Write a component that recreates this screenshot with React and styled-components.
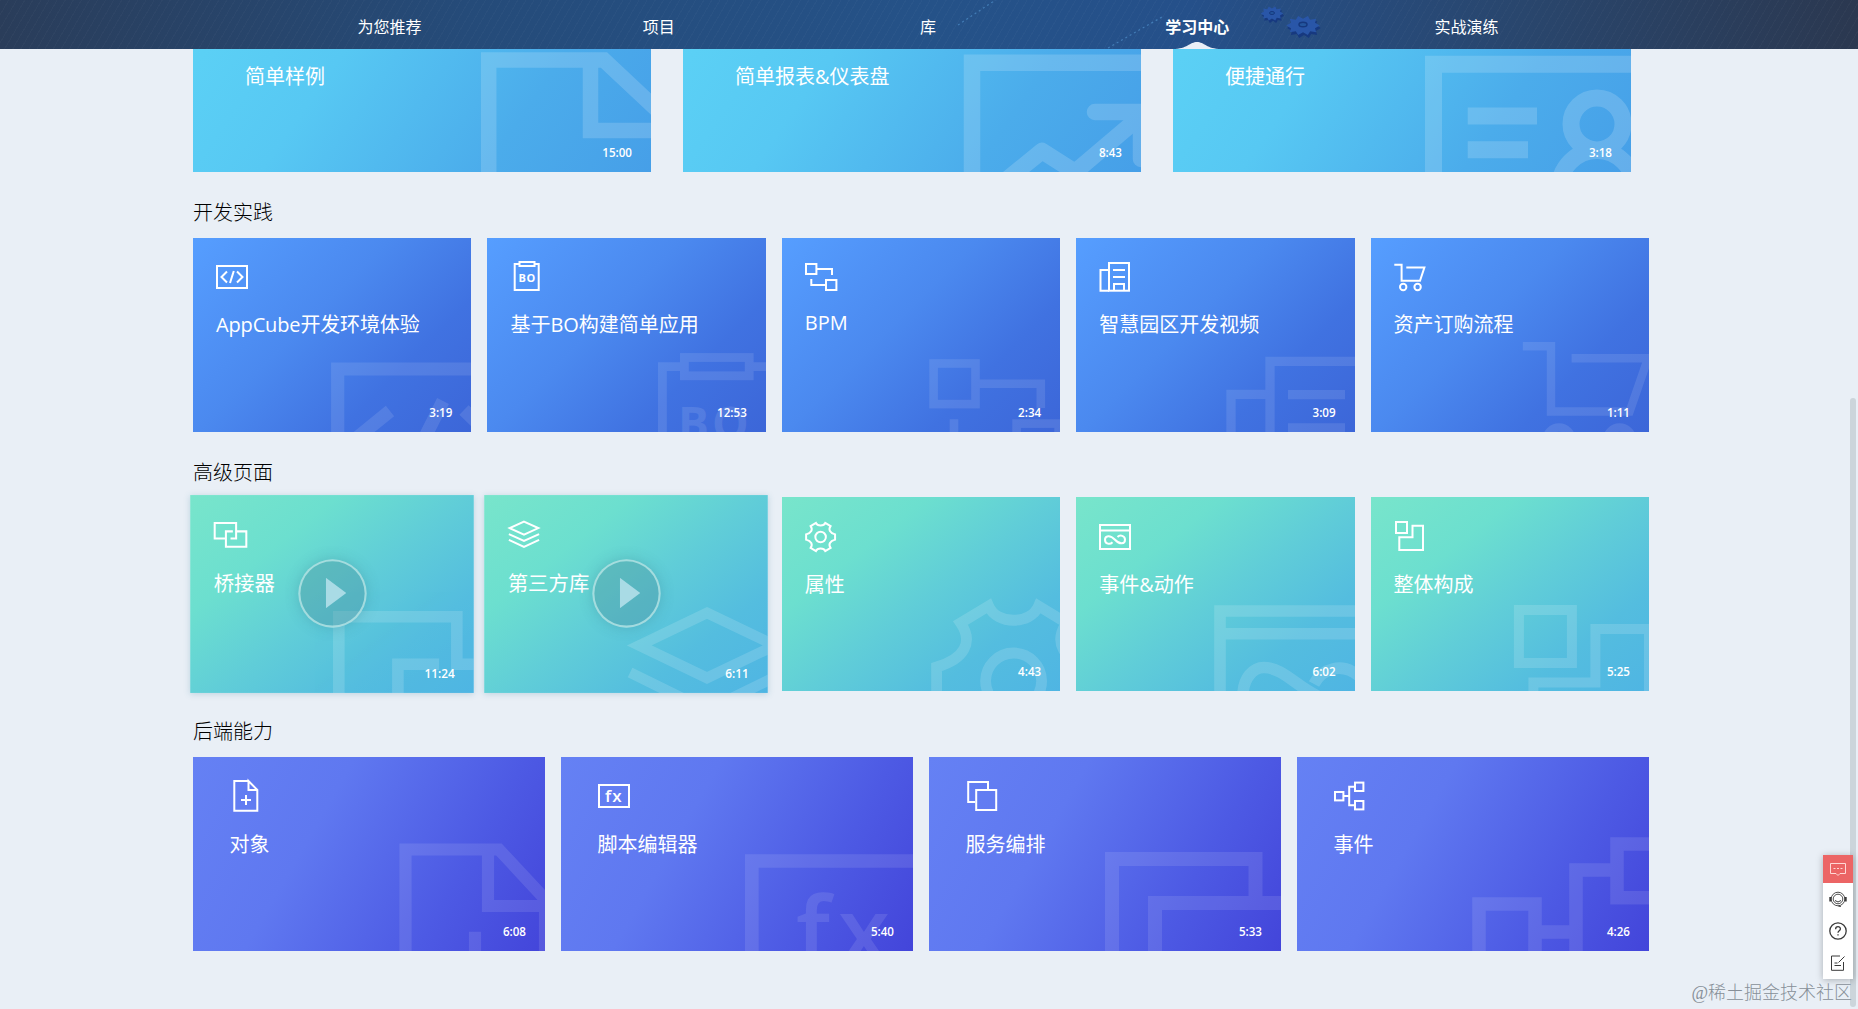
import styled, { createGlobalStyle, css } from "styled-components";

const GEAR =
  "M-77 -14C-49 -22 -40 -39 -53 -58L-25 -75C-17 -56 17 -56 25 -75L53 -58C40 -39 49 -22 77 -14V14C49 22 40 39 53 58L25 75C17 56 -17 56 -25 75L-53 58C-40 39 -49 22 -77 14Z";

const menu = ["为您推荐", "项目", "库", "学习中心", "实战演练"];

const introCards = [
  {
    title: "简单样例",
    time: "15:00",
    art: (
      <g strokeWidth="15.5">
        <path d="M295.7 210V93H411L475 153" />
        <path d="M397.5 93V163.5H470" />
      </g>
    ),
  },
  {
    title: "简单报表&仪表盘",
    time: "8:43",
    art: (
      <g strokeWidth="16.5">
        <path d="M289 210V95.7H470" />
        <path d="M322 214L359 184L392 205L458 149" strokeLinejoin="round" />
        <path d="M412 145H458V192" strokeLinecap="round" />
      </g>
    ),
  },
  {
    title: "便捷通行",
    time: "3:18",
    art: (
      <g strokeWidth="17">
        <path d="M260.5 210V97.3H470" />
        <path d="M294.7 149H364M294.7 182.8H355" />
        <circle cx="424" cy="157" r="26" />
        <circle cx="424" cy="221" r="37.5" />
      </g>
    ),
  },
];

const devCards = [
  {
    title: "AppCube开发环境体验",
    time: "3:19",
    tight: true,
    icon: (
      <>
        <rect x="1" y="5" width="30" height="22" />
        <path d="M11 10.5L5.5 16L11 21.5M21 10.5L26.5 16L21 21.5M17.8 10L14 22" />
      </>
    ),
    art: (
      <g strokeWidth="13.2">
        <path d="M144.7 200V131H290" />
        <path d="M197 173L160 203M250 163L230 203M271 172L300 200" />
      </g>
    ),
  },
  {
    title: "基于BO构建简单应用",
    time: "12:53",
    icon: (
      <>
        <path d="M9 3H4.7V29H28.7V3H25" />
        <rect x="9.5" y="1" width="15" height="4" />
        <IconText x="8.4" y="21.3" fontSize="11" fontWeight="700" letterSpacing="0.6">
          BO
        </IconText>
      </>
    ),
    art: (
      <g strokeWidth="8.8">
        <path d="M175.4 200V128.7H197M262 128.7H285" />
        <rect x="197.4" y="119.5" width="64.8" height="18.3" />
        <IconText x="191" y="202" fontSize="46" fontWeight="700" letterSpacing="3">
          BO
        </IconText>
      </g>
    ),
  },
  {
    title: "BPM",
    time: "2:34",
    raised: true,
    icon: (
      <>
        <rect x="1" y="3" width="10.4" height="10" />
        <rect x="21" y="19" width="10.4" height="10" />
        <path d="M11.4 8H27V14M6.3 18V24H21" />
      </>
    ),
    art: (
      <g strokeWidth="8.6">
        <rect x="151.6" y="125.5" width="41.9" height="40.6" />
        <rect x="234.6" y="185.6" width="42" height="41" />
        <path d="M193.5 145.7H258.8V170M172 181.3V200" />
      </g>
    ),
  },
  {
    title: "智慧园区开发视频",
    time: "3:09",
    icon: (
      <>
        <path d="M9 9H1.5V29.7H10" />
        <rect x="10" y="2" width="20" height="27.7" />
        <path d="M14 9H26M14 16H26M15 29.7V23H25V29.7" />
      </>
    ),
    art: (
      <g strokeWidth="9.3">
        <path d="M155 200V156.3H194M194 200V123.3H290" />
        <path d="M212 156.7H269M212 190H269" />
      </g>
    ),
  },
  {
    title: "资产订购流程",
    time: "1:11",
    icon: (
      <>
        <path d="M0.3 3.8H7.6V19.8H26L30.4 6.6H12.3" />
        <circle cx="9.2" cy="26" r="3.2" />
        <circle cx="23.6" cy="26" r="3.2" />
      </>
    ),
    art: (
      <g strokeWidth="8.4">
        <path d="M151.8 108.2H180V173.5H258.6L277 120.3H200.6" />
        <circle cx="188" cy="202" r="12.5" />
        <circle cx="248.6" cy="202" r="12.5" />
      </g>
    ),
  },
];

const pageCards = [
  {
    title: "桥接器",
    time: "11:24",
    active: true,
    icon: (
      <>
        <path d="M12 20.6H1V5.4H22V20.6H16.5" />
        <path d="M18.8 13.6H12V28.6H32V13.6H22" />
      </>
    ),
    art: (
      <g strokeWidth="11.3">
        <path d="M145.7 200V119.4H261.4V165.8H285" />
        <path d="M203.6 200V165.8H244" />
      </g>
    ),
  },
  {
    title: "第三方库",
    time: "6:11",
    active: true,
    icon: (
      <>
        <path d="M16 4L30 10.4L16 16.8L2 10.4Z" />
        <path d="M1.2 16.3L16 23L30.8 16.3M1.2 22L16 28.8L30.8 22" />
      </>
    ),
    art: (
      <g strokeWidth="10.5">
        <path d="M218.4 115.5L285 147.4L218.4 179.3L152 147.4Z" />
        <path d="M143 174L218.4 211L290 176" />
      </g>
    ),
  },
  {
    title: "属性",
    time: "4:43",
    icon: (
      <g transform="translate(15.6 17) scale(0.188)" strokeWidth="10.6">
        <path d={GEAR} />
        <circle r="28" />
      </g>
    ),
    art: (
      <g transform="translate(231.6 184)" strokeWidth="10.8">
        <path d={GEAR} />
        <circle r="28" />
      </g>
    ),
  },
  {
    title: "事件&动作",
    time: "6:02",
    icon: (
      <>
        <path d="M1 5H31V29H1ZM1 10.4H31" />
        <path d="M18.5 17C21 14.5 26 15.5 26 19.7C26 24 21 25 16 19.7C11 14.5 6 15.5 6 19.7C6 24 11 25 13.5 22.3" />
      </>
    ),
    art: (
      <g strokeWidth="11.6">
        <path d="M144 200V114H290M144 136.7H290" />
        <path d="M167 202C166 180 178 170.5 188 170.5C208 170.5 222 192 248 202" />
        <path d="M238 187C246 172 266 164 284 180" />
      </g>
    ),
  },
  {
    title: "整体构成",
    time: "5:25",
    icon: (
      <>
        <rect x="2" y="2" width="11" height="11" />
        <path d="M18.5 5.7H29V30H5.3V17.3H18.5Z" />
      </>
    ),
    art: (
      <g strokeWidth="10">
        <rect x="147.9" y="113" width="53" height="53" />
        <path d="M162.4 200V185.5H224.4V132H278V200" />
      </g>
    ),
  },
];

const backendCards = [
  {
    title: "对象",
    time: "6:08",
    icon: (
      <>
        <path d="M18.5 1H4.3V30.7H27.3V10L18.5 1V10H27.3" />
        <path d="M11 20H21M16 15V25" />
      </>
    ),
    art: (
      <g strokeWidth="12.2">
        <path d="M212.5 200V92.5H306L352 142V200" />
        <path d="M295 92.5V149H352M282 174.7V200" />
      </g>
    ),
  },
  {
    title: "脚本编辑器",
    time: "5:40",
    icon: (
      <>
        <rect x="1" y="5" width="30" height="22" />
        <IconText x="7" y="22.3" fontSize="17" fontWeight="600" letterSpacing="1.2">
          fx
        </IconText>
      </>
    ),
    art: (
      <g strokeWidth="13.7">
        <path d="M190.8 200V104H360" />
        <IconText x="235" y="208" fontSize="94" fontWeight="600" letterSpacing="8">
          fx
        </IconText>
      </g>
    ),
  },
  {
    title: "服务编排",
    time: "5:33",
    icon: (
      <>
        <path d="M9.2 22H2.2V2H22V9" />
        <rect x="10.2" y="10" width="20" height="20" />
      </>
    ),
    art: (
      <g strokeWidth="14">
        <path d="M183 200V102H326.5V146" />
        <path d="M226 200V146H360" />
      </g>
    ),
  },
  {
    title: "事件",
    time: "4:26",
    icon: (
      <>
        <rect x="1" y="12" width="8.4" height="8.4" />
        <rect x="21" y="2.6" width="8.4" height="8.4" />
        <rect x="21" y="21" width="8.4" height="8.4" />
        <path d="M9.4 16H15M21 6.8H15.2V25.2H21" />
      </>
    ),
    art: (
      <g strokeWidth="13.5">
        <rect x="182" y="147" width="56" height="56" />
        <path d="M238 175H279M279 200V113H320" />
        <rect x="320" y="87" width="56" height="53.7" />
      </g>
    ),
  },
];

function IconText({ children, ...rest }) {
  return (
    <text fill="#fff" stroke="none" fontFamily="'Open Sans', 'Noto Sans', sans-serif" {...rest}>
      {children}
    </text>
  );
}

function VideoCard({ card, theme, inset }) {
  return (
    <Card $theme={theme} $inset={inset} $active={card.active}>
      <Art $opacity={themes[theme].art}>{card.art}</Art>
      {card.icon && (
        <Icon viewBox="0 0 32 32" $active={card.active}>
          {card.icon}
        </Icon>
      )}
      <Title $raised={card.raised} $tight={card.tight}>
        {card.title}
      </Title>
      <Time>{card.time}</Time>
      {card.active && (
        <Play>
          <svg width="20" height="30" viewBox="0 0 20 30">
            <path d="M0 0L20 15L0 30Z" fill="#a9dbe5" />
          </svg>
        </Play>
      )}
    </Card>
  );
}

function Section({ heading, cards, theme, inset }) {
  return (
    <section>
      <Heading>{heading}</Heading>
      <Row $count={cards.length}>
        {cards.map((card) => (
          <VideoCard key={card.title} card={card} theme={theme} inset={inset} />
        ))}
      </Row>
    </section>
  );
}

function HeaderArt() {
  const cog = "M-14 0L-10 -3L-11 -7L-6 -6L-4 -10L0 -7L4 -10L6 -6L11 -7L10 -3L14 0L10 3L11 7L6 6L4 10L0 7L-4 10L-6 6L-11 7L-10 3Z";
  return (
    <HeaderSvg viewBox="0 0 1858 49">
      <g stroke="#4f8fca" strokeWidth="1.2" strokeDasharray="2 3" opacity="0.7">
        <path d="M958 25L1000 -3" />
        <path d="M1108 48L1162 17" />
      </g>
      <g fill="#17397f">
        <path d={cog} transform="translate(1273 15.5) scale(0.8 0.75)" />
        <path d={cog} transform="translate(1304 28) scale(1.2 1)" />
      </g>
      <g fill="#2956a8">
        <path d={cog} transform="translate(1272 13.5) scale(0.8 0.7)" />
        <path d={cog} transform="translate(1303 25.5) scale(1.2 0.95)" />
      </g>
      <ellipse cx="1303" cy="24.5" rx="4" ry="2.3" fill="#24569e" stroke="#16397f" strokeWidth="1.5" />
      <ellipse cx="1272" cy="13" rx="2.5" ry="1.5" fill="#24569e" stroke="#16397f" />
    </HeaderSvg>
  );
}

function Toolbar() {
  return (
    <Tools>
      <Tool $hot>
        <svg width="16" height="15" viewBox="0 0 16 15">
          <path d="M0.5 1.5H15.5V11.5H10L8 13.5L6 11.5H0.5Z" />
          <path d="M3.5 6.5H5.5M7 6.5H9M10.5 6.5H12.5" />
        </svg>
      </Tool>
      <Tool>
        <svg width="18" height="17" viewBox="0 0 18 17">
          <circle cx="9" cy="8" r="6.8" strokeWidth="0.9" />
          <circle cx="9" cy="8" r="4.8" strokeWidth="0.9" />
          <path d="M6 9.5Q9 12.5 12 9.5" />
          <path d="M1.3 6V10.5M16.7 6V10.5" strokeWidth="2" />
          <path d="M9.5 15.3H12" />
        </svg>
      </Tool>
      <Tool>
        <svg width="18" height="18" viewBox="0 0 18 18">
          <circle cx="9" cy="9" r="8.2" strokeWidth="1.3" />
          <path d="M6.6 7.2C6.6 3.8 11.5 4 11.4 7C11.3 8.8 9 8.8 9 10.8M9 12.3V13.5" strokeWidth="1.3" />
        </svg>
      </Tool>
      <Tool>
        <svg width="16" height="16" viewBox="0 0 16 16">
          <path d="M10 1H1.5V15.3H13.5V7" />
          <path d="M14.5 1.5L8.5 7.5M4.5 8H7.5M4.5 10.5H11" />
        </svg>
      </Tool>
    </Tools>
  );
}

export default function App() {
  return (
    <Page>
      <GlobalStyle />
      <Header>
        <HeaderArt />
        <Nav>
          {menu.map((item) => (
            <NavItem key={item} $current={item === "学习中心"}>
              {item}
              {item === "学习中心" && (
                <Bump viewBox="0 0 48 7">
                  <path d="M0 7C14 7 17 0 24 0C31 0 34 7 48 7Z" fill="#e9eff7" />
                </Bump>
              )}
            </NavItem>
          ))}
        </Nav>
      </Header>
      <Main>
        <IntroRow>
          {introCards.map((card) => (
            <VideoCard key={card.title} card={card} theme="sky" inset={52} />
          ))}
        </IntroRow>
        <Section heading="开发实践" cards={devCards} theme="blue" inset={23} />
        <Section heading="高级页面" cards={pageCards} theme="green" inset={23} />
        <Section heading="后端能力" cards={backendCards} theme="indigo" inset={36.5} />
      </Main>
      <ScrollThumb />
      <Toolbar />
      <Watermark>@稀土掘金技术社区</Watermark>
    </Page>
  );
}

const themes = {
  sky: {
    background: "linear-gradient(125deg, #5dd4f6 0%, #57c8f3 35%, #4baceb 72%, #469fe8 100%)",
    art: 0.16,
  },
  blue: {
    background: "linear-gradient(135deg, #569eff 0%, #4b89ef 42%, #4072e1 72%, #3c66d8 100%)",
    art: 0.1,
  },
  green: {
    background: "linear-gradient(142deg, #78e5cb 0%, #6cdfcf 28%, #60cdd8 52%, #54bddf 76%, #4fb5e3 100%)",
    art: 0.14,
  },
  indigo: {
    background: "linear-gradient(120deg, #6581f4 0%, #5f78f0 35%, #4d5ae4 72%, #4345da 100%)",
    art: 0.1,
  },
};

const GlobalStyle = createGlobalStyle`
  body {
    margin: 0;
    background: #e9eff6;
    overflow: hidden;
    font-family: "Open Sans", "Noto Sans CJK SC", sans-serif;
  }
`;

const Page = styled.div`
  position: relative;
  height: 1009px;
  overflow: hidden;
`;

const Header = styled.header`
  position: relative;
  z-index: 2;
  height: 49px;
  background:
    repeating-linear-gradient(
      120deg,
      rgba(255, 255, 255, 0.025) 0 1px,
      transparent 1px 7px
    ),
    linear-gradient(90deg, #2a3d5a 0%, #254b79 25%, #255288 50%, #25508a 64%, #29466d 82%, #2b3850 100%);
`;

const HeaderSvg = styled.svg`
  position: absolute;
  inset: 0;
  width: 1858px;
  height: 49px;
`;

const Nav = styled.nav`
  position: relative;
  width: 1346px;
  height: 49px;
  margin: 0 0 0 255px;
  display: grid;
  grid-template-columns: repeat(5, 1fr);
`;

const NavItem = styled.a`
  position: relative;
  display: flex;
  align-items: center;
  justify-content: center;
  padding-top: 5px;
  color: #ffffff;
  font-size: 16px;
  line-height: 24px;
  font-weight: ${(props) => (props.$current ? 700 : 400)};
`;

const Bump = styled.svg`
  position: absolute;
  left: 50%;
  bottom: 0;
  width: 48px;
  height: 7px;
  margin-left: -24px;
`;

const Main = styled.main`
  width: 1456px;
  margin: -82px 0 0 193px;
`;

const IntroRow = styled.div`
  width: 1438px;
  display: grid;
  grid-template-columns: repeat(3, 1fr);
  grid-auto-rows: 205px;
  gap: 32px;

  h3 {
    margin-top: 95px;
  }
`;

const Row = styled.div`
  display: grid;
  grid-template-columns: repeat(${(props) => props.$count}, 1fr);
  grid-auto-rows: 193.7px;
  gap: 16px;
`;

const Heading = styled.h2`
  height: 65.9px;
  box-sizing: border-box;
  margin: 0;
  padding-top: 26px;
  color: #000000;
  font-size: 20px;
  font-weight: 300;
  line-height: 30px;
`;

const Card = styled.article`
  position: relative;
  box-sizing: border-box;
  overflow: hidden;
  padding: 0 ${(props) => props.$inset}px;
  background: ${(props) => themes[props.$theme].background};
  color: #ffffff;

  ${(props) =>
    props.$active &&
    css`
      transform: scale(1.02);
      box-shadow: 0 1px 6px rgba(60, 130, 160, 0.25);
    `}
`;

const Art = styled.svg`
  position: absolute;
  inset: 0;
  width: 100%;
  height: 100%;
  fill: none;
  stroke: #ffffff;
  opacity: ${(props) => props.$opacity};
`;

const Icon = styled.svg`
  position: relative;
  display: block;
  width: 32px;
  height: 32px;
  margin-top: ${(props) => (props.$active ? 22 : 23)}px;
  overflow: visible;
  fill: none;
  stroke: #ffffff;
  stroke-width: 2;
`;

const Title = styled.h3`
  position: relative;
  margin: ${(props) => (props.$raised ? 15 : 17.5)}px 0 0;
  font-size: 20px;
  font-weight: 400;
  line-height: 30px;
  letter-spacing: ${(props) => (props.$tight ? "-0.15px" : "normal")};
  white-space: nowrap;
`;

const Time = styled.span`
  position: absolute;
  right: 19px;
  bottom: 10px;
  font-size: 11.6px;
  font-weight: 600;
  line-height: 18px;
`;

const Play = styled.div`
  position: absolute;
  top: 50%;
  left: 50%;
  width: 67px;
  height: 67px;
  box-sizing: border-box;
  margin: -34px 0 0 -33px;
  padding-left: 6px;
  display: flex;
  align-items: center;
  justify-content: center;
  border: 2px solid rgba(190, 232, 232, 0.75);
  border-radius: 50%;
  background: rgba(70, 125, 140, 0.3);
  box-shadow: 0 0 14px rgba(50, 120, 135, 0.3);
`;

const ScrollThumb = styled.div`
  position: absolute;
  top: 398px;
  right: 2px;
  width: 6px;
  height: 609px;
  border-radius: 3px;
  background: #ccd5db;
`;

const Tools = styled.aside`
  position: absolute;
  top: 855px;
  right: 5px;
  width: 30px;
  height: 124px;
  background: #ffffff;
  box-shadow: 0 1px 7px rgba(0, 0, 0, 0.28);
`;

const Tool = styled.button`
  width: 30px;
  height: ${(props) => (props.$hot ? 28 : 32)}px;
  padding: 0;
  border: 0;
  display: flex;
  align-items: center;
  justify-content: center;
  background: ${(props) => (props.$hot ? "#ec6565" : "transparent")};

  svg {
    fill: none;
    stroke: ${(props) => (props.$hot ? "#ffd9d6" : "#3a3a3a")};
    stroke-width: 1;
  }
`;

const Watermark = styled.span`
  position: absolute;
  right: 6px;
  bottom: 2px;
  color: #878f98;
  font-family: "Liberation Serif", "Noto Sans CJK SC", serif;
  font-size: 18px;
  font-weight: 300;
  line-height: 27px;
`;
